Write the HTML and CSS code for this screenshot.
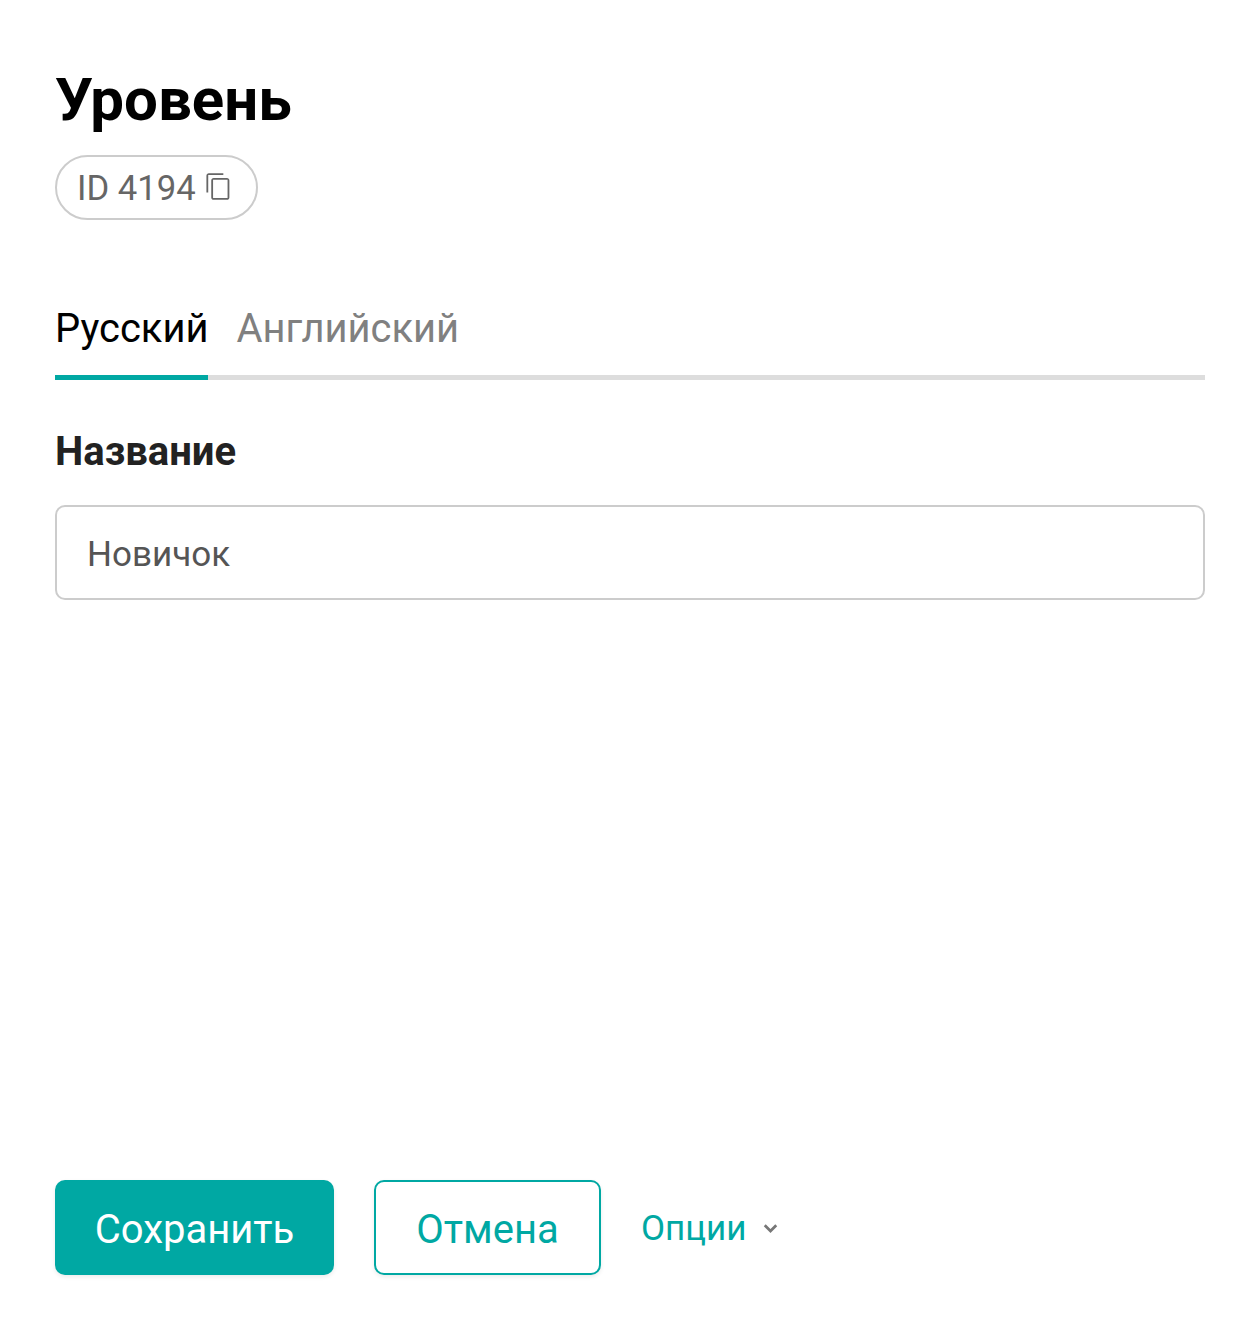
FILE: index.html
```html
<!DOCTYPE html>
<html lang="ru">
<head>
    <meta charset="UTF-8">
    <meta name="viewport" content="width=device-width, initial-scale=1.0">
    <title>Уровень</title>
    <link rel="stylesheet" href="styles.css">
</head>
<body>
    <div class="page">
        <h1 class="page-title">Уровень</h1>
        <div class="id-chip">
            <span>ID 4194</span>
            <svg class="copy-icon" viewBox="0 0 24 24"><path d="M16 1H4c-1.100 0-2 .9-2 2v14h1.500V2.500H16V1zm3 4H8c-1.100 0-2 .9-2 2v14c0 1.100.9 2 2 2h11c1.100 0 2-.9 2-2V7c0-1.100-.9-2-2-2zm.5 16.500h-12v-15h12v15z"/></svg>
        </div>

        <div class="tabs">
            <div class="tab active">Русский</div>
            <div class="tab">Английский</div>
        </div>

        <label class="field-label" for="name">Название</label>
        <input class="field-input" id="name" type="text" value="Новичок">

        <div class="actions">
            <button class="btn btn-save">Сохранить</button>
            <button class="btn btn-cancel">Отмена</button>
            <div class="options">
                <span>Опции</span>
                <svg class="chevron" viewBox="0 0 12 8"><path d="M1.400 1 6 5.600 10.600 1" /></svg>
            </div>
        </div>
    </div>
</body>
</html>
```

FILE: styles.css
```css
* {
    box-sizing: border-box;
}

html, body {
    height: 100%;
}

body {
    margin: 0;
    background-color: #fff;
    font-family: Roboto, "Liberation Sans", sans-serif;
}

.page {
    display: flex;
    flex-direction: column;
    align-items: flex-start;
    height: 1325px;
    padding: 64px 46px 50px 55px;
}

.page-title {
    margin: 0;
    padding-top: 1px;
    font-size: 60px;
    line-height: 70px;
    font-weight: 700;
    color: #000;
}

.id-chip {
    display: flex;
    align-items: center;
    gap: 8px;
    height: 65px;
    margin-top: 20px;
    padding: 0 23px 0 20px;
    border: 2px solid #ccc;
    border-radius: 33px;
    font-size: 34.67px;
    color: #666;
}

.copy-icon {
    width: 29px;
    height: 29px;
    margin-bottom: 2px;
    fill: #666;
}

/* tabs */
.tabs {
    display: flex;
    gap: 28px;
    width: 100%;
    margin-top: 76px;
    border-bottom: 5px solid #ddd;
}

.tab {
    height: 84px;
    margin-bottom: -5px;
    padding-top: 8px;
    font-size: 39.9px;
    line-height: 50px;
    color: #808080;
    border-bottom: 5px solid transparent;
}

.tab.active {
    color: #000;
    border-bottom-color: #00a8a3;
}

/* field */
.field-label {
    margin-top: 47px;
    font-size: 40px;
    line-height: 50px;
    font-weight: 700;
    color: #222;
}

.field-input {
    width: 100%;
    height: 95px;
    margin-top: 28px;
    padding: 4px 30px 0;
    border: 2px solid #ccc;
    border-radius: 10px;
    font-family: inherit;
    font-size: 35px;
    color: #555;
    outline: none;
}

/* bottom buttons */
.actions {
    display: flex;
    align-items: center;
    margin-top: auto;
}

.btn {
    height: 95px;
    padding-top: 4px;
    border-radius: 10px;
    font-family: inherit;
    font-size: 40px;
    cursor: pointer;
    box-shadow: 0 2px 4px rgba(0,0,0,0.08);
}

.btn-save {
    width: 279px;
    border: none;
    background-color: #00a8a3;
    color: #fff;
}

.btn-cancel {
    width: 227px;
    margin-left: 40px;
    border: 2px solid #00a8a3;
    background-color: #fff;
    color: #00a8a3;
}

.options {
    display: flex;
    align-items: center;
    gap: 17px;
    margin-left: 40px;
    padding-top: 2px;
    font-size: 35px;
    color: #00a8a3;
}

.chevron {
    width: 15px;
    height: 10px;
    fill: none;
    stroke: #777;
    stroke-width: 2.200;
}
```
